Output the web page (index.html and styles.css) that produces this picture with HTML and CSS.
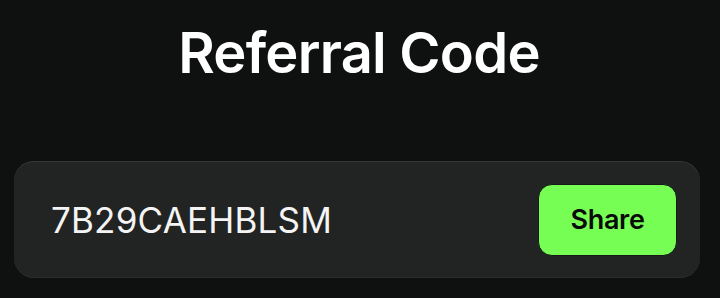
FILE: index.html
```html
<!DOCTYPE html>
<html lang="en">
<head>
	<meta charset="UTF-8">
	<title>Referral Code</title>
	<link rel="stylesheet" href="styles.css">
</head>
<body>
	<div class="page">
		<h1 class="title">Referral Code</h1>
		<div class="code-box">
			<span class="code">7B29CAEHBLSM</span>
			<button class="share-btn">Share</button>
		</div>
	</div>
</body>
</html>
```

FILE: styles.css
```css
*{padding:0;margin:0;box-sizing:border-box;}
body{
	background:#0f1110;
	font-family:Inter, "Liberation Sans", sans-serif;
	color:#fff;
}
.page{
	width:720px;
	height:298px;
	padding:21px 20px 0 14px;
}
.title{
	font-size:56px;
	line-height:64px;
	font-weight:600;
	text-align:center;
	letter-spacing:-0.75px;
	padding-left:4px;
}
.code-box{
	display:flex;
	align-items:center;
	justify-content:space-between;
	margin-top:76px;
	height:117px;
	padding:0 23px 0 37px;
	background:#222323;
	border-radius:20px;
	box-shadow:inset 0 1px 0 #343535, inset 0 -1px 0 #2a2b2b;
}
.code{
	font-size:35px;
	letter-spacing:0.2px;
	color:#f4f4f4;
}
.share-btn{
	width:139px;
	height:72px;
	background:#77fe54;
	border:1px solid #161816;
	border-radius:14px;
	font-family:Inter, "Liberation Sans", sans-serif;
	font-size:27px;
	font-weight:600;
	letter-spacing:-0.3px;
	color:#0a0a0a;
	cursor:pointer;
}
```
